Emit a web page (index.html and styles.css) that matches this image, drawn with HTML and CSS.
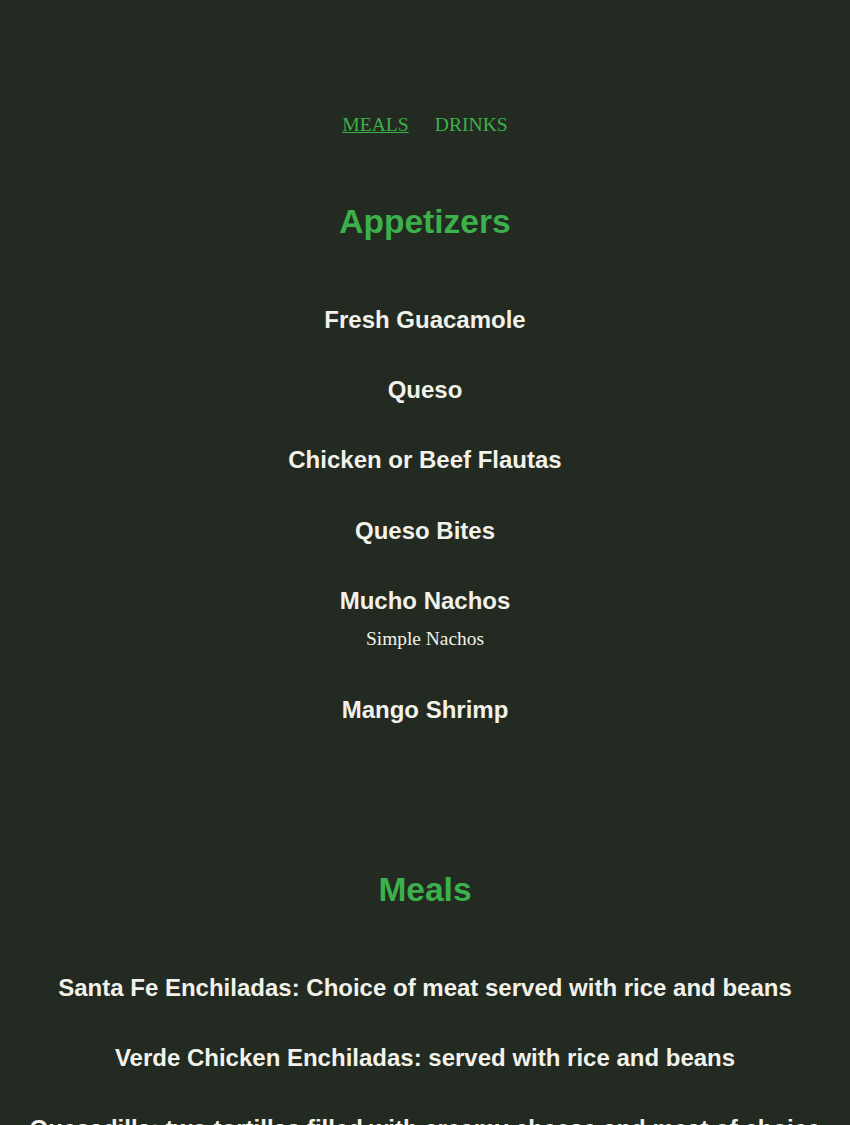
FILE: index.html
```html
<!DOCTYPE html>
<html>
<head>
<meta charset="utf-8">
<link rel="stylesheet" href="styles.css">
</head>
<body>
<nav class="nav">
  <a class="nav-link active" href="#">MEALS</a>
  <a class="nav-link" href="#">DRINKS</a>
</nav>
<section class="menu-section">
  <h2 class="section-title">Appetizers</h2>
  <div class="items">
    <div class="item"><h3 class="item-name">Fresh Guacamole</h3></div>
    <div class="item"><h3 class="item-name">Queso</h3></div>
    <div class="item"><h3 class="item-name">Chicken or Beef Flautas</h3></div>
    <div class="item"><h3 class="item-name">Queso Bites</h3></div>
    <div class="item"><h3 class="item-name">Mucho Nachos</h3><p class="item-desc">Simple Nachos</p></div>
    <div class="item"><h3 class="item-name">Mango Shrimp</h3></div>
  </div>
</section>
<section class="menu-section">
  <h2 class="section-title">Meals</h2>
  <div class="items">
    <div class="item"><h3 class="item-name">Santa Fe Enchiladas: Choice of meat served with rice and beans</h3></div>
    <div class="item"><h3 class="item-name">Verde Chicken Enchiladas: served with rice and beans</h3></div>
    <div class="item"><h3 class="item-name">Quesadilla: two tortillas filled with creamy cheese and meat of choice</h3></div>
  </div>
</section>
</body>
</html>
```
FILE: styles.css
```css
html, body {
  margin: 0;
  padding: 0;
  background: #222a22;
}
body {
  color: #f2f2ea;
  font-family: "Liberation Serif", serif;
  text-align: center;
}
.nav {
  display: flex;
  justify-content: center;
  gap: 26px;
  padding-top: 113px;
  font-size: 19.6px;
  line-height: 23px;
}
.nav-link {
  color: #3cb04a;
  text-decoration: none;
}
.nav-link.active {
  text-decoration: underline;
}
.menu-section {
  padding-top: 67px;
  padding-bottom: 59px;
}
.section-title {
  margin: 0;
  font-family: "Liberation Sans", Arial, sans-serif;
  font-size: 33.5px;
  line-height: 38px;
  font-weight: bold;
  color: #3cb04a;
}
.items {
  margin-top: 44px;
}
.item {
  padding: 21.1px 0;
}
.item-name {
  margin: 0;
  font-family: "Liberation Sans", Arial, sans-serif;
  font-size: 24px;
  line-height: 28px;
  font-weight: bold;
  color: #f2f2ea;
}
.item-desc {
  margin: 13px 0 4px;
  font-family: "Liberation Serif", serif;
  font-size: 19.4px;
  line-height: 22px;
}
```
